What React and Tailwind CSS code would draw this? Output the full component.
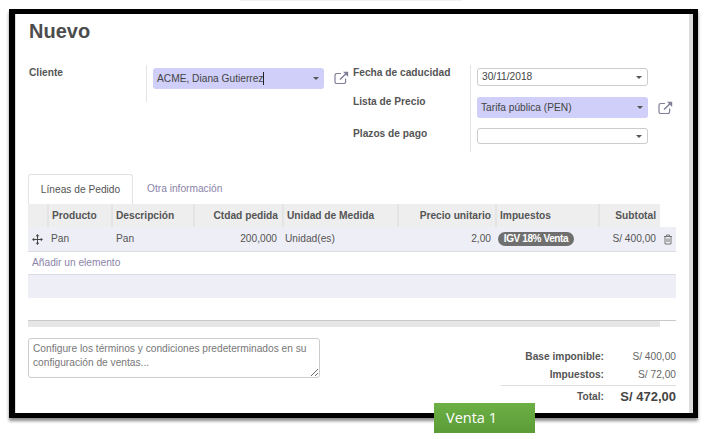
const ExternalIcon = () => (
  <svg width="15" height="13" viewBox="0 0 15 13" fill="none" stroke="#7f7f9a" strokeWidth="1.2" className="shrink-0">
    <path d="M7 2.5H2.8A1.8 1.8 0 0 0 1 4.3v6.4a1.8 1.8 0 0 0 1.8 1.8h7a1.8 1.8 0 0 0 1.8-1.8V7.5" />
    <path d="M6 8.5 12.5 2.2" strokeWidth="1.5" />
    <path d="M9 .8h5.2V6z" fill="#7f7f9a" stroke="none" />
  </svg>
)

const Caret = () => (
  <span className="w-0 h-0 border-x-[3px] border-x-transparent border-t-[3px] border-t-[#555] shrink-0"></span>
)

const Select = ({ value, active, h, cursor }) => (
  <div className={`w-[171px] ${h} flex items-center justify-between pl-[4px] pr-[5px] rounded-[3px] text-[10.2px] text-[#444] ${active ? 'bg-[#cfcff9]' : 'bg-white border border-[#ccc]'}`}>
    <span className="flex items-center">
      {value}
      {cursor && <span className="w-px h-[13px] bg-[#222]"></span>}
    </span>
    <Caret />
  </div>
)

const columns = 'grid grid-cols-[19px_64px_82px_89px_115px_98px_103px_62px_16px]'

const headers = [
  { label: '' },
  { label: 'Producto' },
  { label: 'Descripción' },
  { label: 'Ctdad pedida', right: true },
  { label: 'Unidad de Medida' },
  { label: 'Precio unitario', right: true },
  { label: 'Impuestos' },
  { label: 'Subtotal', right: true },
]

const App = () => {
  return (
    <div className="w-[705px] h-[439px] bg-white relative overflow-hidden font-['Liberation_Sans',Arial,sans-serif]">
      <div className="h-px w-[222px] ml-[240px] bg-[#f1f1f1]"></div>
      <div className="mt-[8px] ml-[9px] w-[689px] h-[409px] border-x-[5px] border-y-[5px] border-l-[6px] border-black shadow-[0_3px_3px_rgba(0,0,0,0.45)] flex bg-white">
        <div className="w-px bg-[#ddd] shrink-0"></div>
        <div className="flex-1 min-w-0 pl-[12px] pr-[13px]">
          <h1 className="mt-[7px] h-[20px] leading-[20px] text-[20px] font-bold text-[#4c4c4c] pl-px">Nuevo</h1>

          <div className="mt-[24px] flex h-[87px]">
            <div className="w-[118px] pl-px text-[10.2px] font-bold text-[#555] leading-[16px] shrink-0">Cliente</div>
            <div className="w-px h-[37px] bg-[#e4e4e4] shrink-0"></div>
            <div className="ml-[6px] pt-[3px]">
              <Select value="ACME, Diana Gutierrez" active h="h-[21px]" cursor />
            </div>
            <div className="ml-[10px] pt-[6px]"><ExternalIcon /></div>
            <div className="ml-[4px] w-[117px] flex flex-col text-[10.2px] font-bold text-[#555] leading-[16px] shrink-0">
              <span>Fecha de caducidad</span>
              <span className="mt-[13px]">Lista de Precio</span>
              <span className="mt-[16px]">Plazos de pago</span>
            </div>
            <div className="w-px h-[87px] bg-[#e4e4e4] shrink-0"></div>
            <div className="ml-[6px] pt-[3px] flex flex-col">
              <Select value="30/11/2018" h="h-[18px]" />
              <div className="mt-[11px] flex items-center">
                <Select value="Tarifa pública (PEN)" active h="h-[21px]" />
                <div className="ml-[10px]"><ExternalIcon /></div>
              </div>
              <div className="mt-[10px]">
                <Select value="" h="h-[16px]" />
              </div>
            </div>
          </div>

          <div className="mt-[22px] flex h-[30px] text-[10.2px]">
            <div className="w-[105px] border border-b-0 border-[#e3e3e3] rounded-t-[3px] bg-white flex items-center justify-center text-[#555]">Líneas de Pedido</div>
            <div className="ml-[14px] flex items-center text-[#8a84a8]">Otra información</div>
          </div>

          <div className={`${columns} h-[23px] text-[10.2px] font-bold text-[#555]`}>
            {headers.map((header, index) => (
              <div key={index} className={`bg-[#eeeeee] border-l-2 border-[#e4e4e4] first:border-l-0 flex items-center ${header.right ? 'justify-end pr-[4px]' : 'pl-[3px]'}`}>
                {header.label}
              </div>
            ))}
          </div>

          <div className={`${columns} h-[25px] items-center bg-[#eeeef6] border-b border-[#dcdce6] text-[10.2px] text-[#555]`}>
            <div className="flex justify-center">
              <svg width="11" height="11" viewBox="0 0 11 11" fill="#444">
                <path d="M5 2h1v7H5zM2 5h7v1H2z" />
                <path d="M5.5 0 7.3 2.2H3.7zM5.5 11 3.7 8.8h3.6zM0 5.5 2.2 3.7v3.6zM11 5.5 8.8 7.3V3.7z" />
              </svg>
            </div>
            <div className="pl-[4px]">Pan</div>
            <div className="pl-[5px]">Pan</div>
            <div className="pr-[5px] text-right">200,000</div>
            <div className="pl-[3px]">Unidad(es)</div>
            <div className="pr-[4px] text-right">2,00</div>
            <div className="pl-[3px]">
              <span className="inline-block h-[14px] w-[76px] rounded-full bg-[#6f6f6f] text-white font-bold text-[10px] tracking-[-0.4px] leading-[14px] text-center">IGV 18% Venta</span>
            </div>
            <div className="pr-[4px] text-right">S/ 400,00</div>
            <div className="flex justify-center">
              <svg width="10" height="11" viewBox="0 0 10 11" fill="none" stroke="#777" strokeWidth="1">
                <path d="M1 2.5h8M3.5 2.5V1h3v1.5M2 2.5v7.5h6V2.5M4 4.5v3.5M6 4.5v3.5" />
              </svg>
            </div>
          </div>

          <div className="h-[23px] flex items-center pl-[4px] border-b border-[#dcdce6] text-[10.2px] text-[#8a84a8]">Añadir un elemento</div>
          <div className="h-[23px] bg-[#eeeef6]"></div>

          <div className="mt-[22px] border-t border-[#c9c9c9]">
            <div className="h-[6px] w-[632px] bg-[#e6e6e6]"></div>
          </div>

          <div className="mt-[11px] flex justify-between">
            <textarea
              readOnly
              className="w-[292px] h-[40px] border border-[#ccc] rounded-[3px] px-[4px] py-[3px] text-[10.2px] leading-[14px] text-[#777] placeholder:text-[#777] outline-none"
              placeholder="Configure los términos y condiciones predeterminados en su configuración de ventas..."
            ></textarea>
            <div className="w-[175px] pt-[10px] text-[10.2px] text-[#666]">
              <div className="flex justify-end h-[18px] items-center">
                <span className="font-bold text-[#555]">Base imponible:</span>
                <span className="w-[72px] text-right">S/ 400,00</span>
              </div>
              <div className="flex justify-end h-[18px] items-center">
                <span className="font-bold text-[#555]">Impuestos:</span>
                <span className="w-[72px] text-right">S/ 72,00</span>
              </div>
              <div className="mt-[1px] flex justify-end h-[22px] items-center border-t border-[#ddd]">
                <span className="font-bold text-[#555]">Total:</span>
                <span className="w-[72px] text-right text-[13px] font-bold text-[#444]">S/ 472,00</span>
              </div>
            </div>
          </div>
        </div>
        <div className="w-[4px] shrink-0 bg-[#dcdcdc]"></div>
      </div>

      <div className="absolute left-[434px] top-[403px] w-[101px] h-[30px] pl-[12px] flex items-center bg-gradient-to-b from-[#6cb044] to-[#5c9c38] text-white text-[14.5px] font-['Open_Sans',sans-serif]">Venta 1</div>
    </div>
  )
}

export default App
